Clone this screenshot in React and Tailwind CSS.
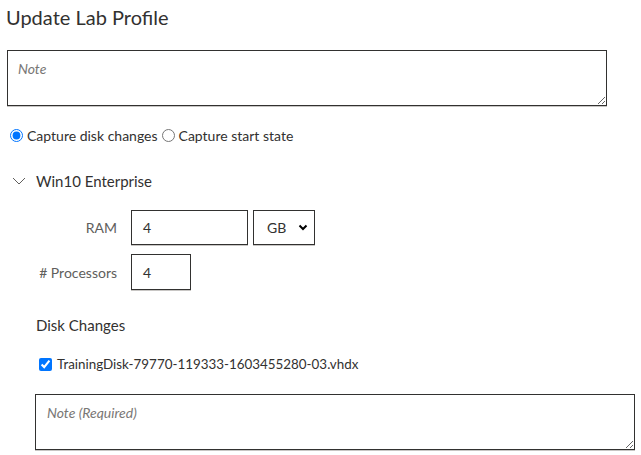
import React from "react";

function ChevronThin() {
  return (
    <svg width="14" height="8" viewBox="0 0 14 8" className="block">
      <path d="M1 1 L7 7 L13 1" fill="none" stroke="#605e5c" strokeWidth="1" />
    </svg>
  );
}

function ChevronBold() {
  return (
    <svg width="10" height="7" viewBox="0 0 10 7" className="block">
      <path d="M1.5 1.5 L5 5 L8.5 1.5" fill="none" stroke="#000" strokeWidth="2" />
    </svg>
  );
}

export default function App() {
  return (
    <div className="w-[641px] h-[455px] overflow-hidden bg-white text-[#323130] font-['Lato',sans-serif]">
      <div className="h-[50px] pl-[6px] pt-[3px] text-[20px] leading-[28px]">Update Lab Profile</div>

      <textarea
        placeholder="Note"
        className="block ml-[7px] w-[600px] h-[56px] border border-[#323130] px-[10px] py-[7px] text-[14px] placeholder:italic placeholder:text-[#797775] shadow-[0_1px_0_#c8c6c4] outline-none"
      />

      <div className="mt-[19px] h-[20px] flex items-center text-[14px] pl-[10px]">
        <input type="radio" name="cap" defaultChecked className="m-0 w-[13px] h-[13px]" />
        <span className="ml-[4px]">Capture disk changes</span>
        <input type="radio" name="cap" className="m-0 ml-[4px] w-[13px] h-[13px]" />
        <span className="ml-[4px]">Capture start state</span>
      </div>

      <div className="mt-[26px] h-[20px] flex items-center pl-[12px]">
        <ChevronThin />
        <span className="ml-[10px] text-[15px]">Win10 Enterprise</span>
      </div>

      <div className="mt-[19px] flex items-center h-[35px]">
        <div className="w-[117px] text-right text-[14px] text-[#605e5c]">RAM</div>
        <div className="ml-[14px] w-[117px] h-[35px] border border-[#323130] flex items-center pl-[11px] text-[14px] shadow-[0_1px_0_#c8c6c4]">4</div>
        <div className="ml-[5px] w-[62px] h-[35px] border border-[#323130] flex items-center justify-between pl-[13px] pr-[6px] text-[14px] shadow-[0_1px_0_#c8c6c4]">
          <span>GB</span>
          <ChevronBold />
        </div>
      </div>

      <div className="mt-[9px] flex items-center h-[36px]">
        <div className="w-[117px] text-right text-[14px] text-[#605e5c]">#&nbsp;Processors</div>
        <div className="ml-[14px] w-[60px] h-[36px] border border-[#323130] flex items-center pl-[11px] text-[14px] shadow-[0_1px_0_#c8c6c4]">4</div>
      </div>

      <div className="mt-[25px] h-[20px] flex items-center pl-[36px] text-[15px]">Disk Changes</div>

      <div className="mt-[19px] h-[20px] flex items-center pl-[39px] text-[13.4px]">
        <input type="checkbox" defaultChecked className="m-0 w-[13px] h-[13px]" />
        <span className="ml-[5px]">TrainingDisk-79770-119333-1603455280-03.vhdx</span>
      </div>

      <textarea
        placeholder="Note (Required)"
        className="block mt-[20px] ml-[35px] w-[600px] h-[56px] border border-[#323130] px-[11px] py-[7px] text-[14px] placeholder:italic placeholder:text-[#797775] shadow-[0_1px_0_#c8c6c4] outline-none"
      />
    </div>
  );
}
